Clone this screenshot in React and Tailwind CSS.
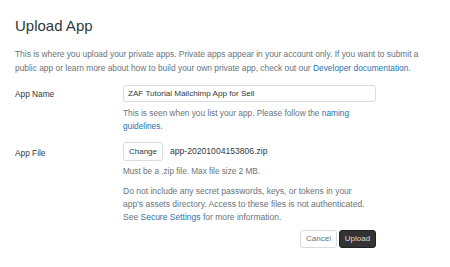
export default function App() {
  return (
    <div className="min-h-screen bg-white px-[15px] pt-[16px] text-[#68737d]" style={{ fontFamily: '"Liberation Sans", Arial, sans-serif' }}>
      <h1 className="text-[15px] leading-[20px] font-medium text-[#2f3941]">Upload App</h1>
      <p className="mt-[11px] text-[8.4px] leading-[14px] text-[#68737d]">
        This is where you upload your private apps. Private apps appear in your account only. If you want to submit a public app or learn more about how to build your own private app, check out our{" "}
        <a className="text-[#1f73b7]">Developer documentation</a>.
      </p>

      <div className="mt-[10px] flex">
        <div className="w-[108px] shrink-0 pt-[3px] text-[8.3px] leading-[12px] font-medium text-[#2f3941]">App Name</div>
        <div className="w-[253px]">
          <div className="h-[17px] rounded-[3px] border border-[#d8dcde] px-[4px] text-[8.1px] leading-[15px] text-[#2f3941]">
            ZAF Tutorial Mailchimp App for Sell
          </div>
          <p className="mt-[5px] text-[8.3px] leading-[13px]">
            This is seen when you list your app. Please follow the <a className="text-[#1f73b7]">naming guidelines</a>.
          </p>
        </div>
      </div>

      <div className="mt-[9px] flex">
        <div className="w-[108px] shrink-0 pt-[5px] text-[8.3px] leading-[12px] font-medium text-[#2f3941]">App File</div>
        <div className="w-[253px]">
          <div className="flex items-center gap-[7px]">
            <button className="h-[19px] w-[40px] rounded-[3px] border border-[#d8dcde] bg-white text-[8px] text-[#2f3941]">Change</button>
            <span className="text-[8.6px] text-[#2f3941]">app-20201004153806.zip</span>
          </div>
          <p className="mt-[4px] text-[8.2px] leading-[13px]">Must be a .zip file. Max file size 2 MB.</p>
          <p className="mt-[7px] w-[247px] text-[8.5px] leading-[13px]">
            Do not include any secret passwords, keys, or tokens in your app's assets directory. Access to these files is not authenticated. See <a className="text-[#1f73b7]">Secure Settings</a> for more information.
          </p>
          <div className="mt-[6px] flex justify-end gap-[2px]">
            <button className="h-[18px] w-[37px] rounded-[3px] border border-[#d8dcde] bg-white text-[8px] text-[#68737d]">Cancel</button>
            <button className="h-[18px] w-[37px] rounded-[3px] border border-[#222] bg-[#333333] text-[8px] text-[#dddddd]">Upload</button>
          </div>
        </div>
      </div>
    </div>
  );
}
